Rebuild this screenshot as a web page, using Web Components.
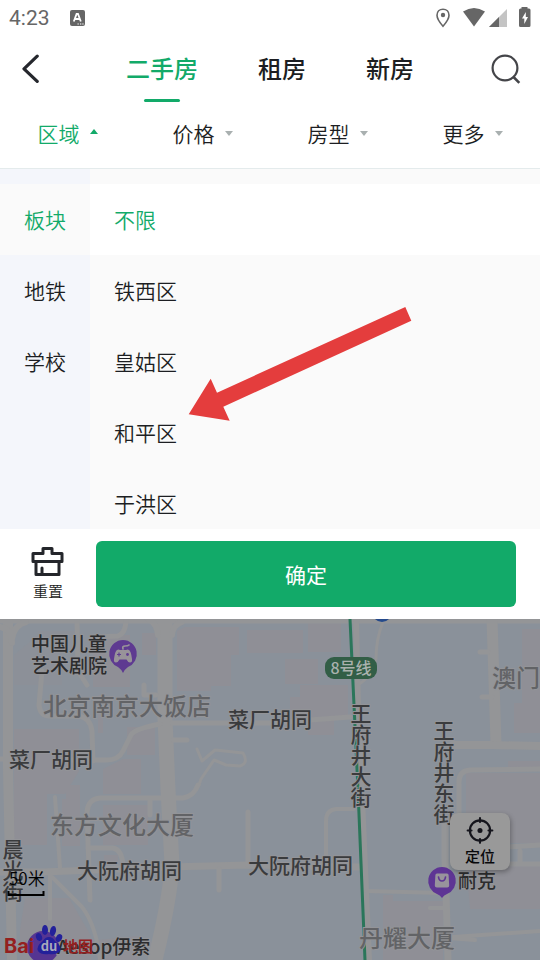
<!DOCTYPE html>
<html lang="zh-CN">
<head>
<meta charset="utf-8">
<meta name="viewport" content="width=device-width, initial-scale=1">
<title>二手房</title>
<style>
  :root {
    --primary-color: #12aa69;
    --text-color: #1c1e22;
    --side-color: #f4f6fb;
    --list-color: #fafafa;
  }
  body {
    margin: 0;
    background-color: #ffffff;
    color: var(--text-color);
    font-family: "Noto Sans CJK SC", sans-serif;
  }
</style>
</head>
<body>
<house-app></house-app>

<script>
class BaseElement extends HTMLElement {
  connectedCallback() {
    if (this.shadowRoot) return;
    const template = document.createElement("template");
    template.innerHTML = this.render();
    this.attachShadow({ mode: "open" });
    this.shadowRoot.appendChild(template.content.cloneNode(true));
  }
}

class StatusBar extends BaseElement {
  render() {
    return `
      <style>
        :host {
          display: flex;
          align-items: center;
          height: 36px;
          padding: 0 8px 0 9px;
          color: #666666;
          font: 21px/36px Roboto, sans-serif;
        }
        .note { margin-left: 20px; }
        .icons { display: flex; align-items: center; margin-left: auto; }
        svg { display: block; }
      </style>
      <span>4:23</span>
      <svg class="note" width="16" height="16" viewBox="0 0 16 16">
        <rect width="15" height="16" rx="2" fill="#666"/>
        <path d="M3.800 11.500 6.600 4h1.400l2.800 7.500M4.800 9h5" fill="none" stroke="#fff" stroke-width="1.800"/>
        <path d="M7.500 14h1.300M10 14h1.300M12.300 14h1.300" stroke="#fff" stroke-width="1.200"/>
      </svg>
      <div class="icons">
        <svg width="96" height="22" viewBox="436 7 96 22" fill="#666">
          <path d="M443 9.200c-3.500 0-6 2.600-6 6 0 4.200 6 11 6 11s6-6.800 6-11c0-3.400-2.500-6-6-6z" fill="none" stroke="#666" stroke-width="1.600"/>
          <circle cx="443" cy="15" r="2.200"/>
          <path d="M463 11.500Q474 4.500 485 11.500L474 26.500z"/>
          <path d="M507 9v18h-18z" fill="#c4c4c4"/>
          <path d="M499 17v10h-10z"/>
          <path d="M521.500 7h6v1.500h1.500a1.500 1.500 0 0 1 1.500 1.500v15.500a1.500 1.500 0 0 1-1.500 1.500h-8.500a1.500 1.500 0 0 1-1.500-1.500V10a1.500 1.500 0 0 1 1.500-1.500h1z"/>
          <path d="M525.800 12 522 18.600h2.300V24l3.700-7h-2.200z" fill="#fff"/>
        </svg>
      </div>
    `;
  }
}

class NavBar extends BaseElement {
  render() {
    return `
      <style>
        :host {
          display: flex;
          align-items: center;
          justify-content: space-between;
          height: 66px;
          padding: 0 19px;
        }
        button {
          display: block;
          padding: 0;
          border: none;
          background: none;
          cursor: pointer;
        }
        svg { display: block; }
        nav { display: flex; gap: 60px; }
        a {
          position: relative;
          padding-bottom: 2px;
          color: var(--text-color);
          font-size: 24px;
          line-height: 64px;
          font-weight: 500;
          text-decoration: none;
        }
        a.active { color: var(--primary-color); }
        a.active::after {
          content: "";
          position: absolute;
          left: 50%;
          bottom: 0;
          width: 36px;
          height: 3px;
          margin-left: -18px;
          border-radius: 2px;
          background-color: var(--primary-color);
        }
      </style>
      <button aria-label="返回">
        <svg width="30" height="30" viewBox="0 0 30 30" fill="none" stroke="#25272d" stroke-width="3.200" stroke-linecap="round" stroke-linejoin="round">
          <path d="M18.200 2.200 5 14.800 18.200 27.400"/>
        </svg>
      </button>
      <nav>
        <a href="#ershoufang" class="active">二手房</a>
        <a href="#zufang">租房</a>
        <a href="#xinfang">新房</a>
      </nav>
      <button aria-label="搜索">
        <svg width="30" height="30" viewBox="0 0 30 30" fill="none" stroke="#444549" stroke-width="2.200">
          <circle cx="14" cy="14" r="12.400"/>
          <path d="M22 22.500 28.300 28.800" stroke-width="2.600"/>
        </svg>
      </button>
    `;
  }
}

class FilterItem extends BaseElement {
  render() {
    return `
      <style>
        :host { display: block; }
        button {
          display: flex;
          align-items: center;
          justify-content: center;
          gap: 10px;
          width: 100%;
          height: 66px;
          padding: 0 0 4px;
          border: none;
          background: none;
          color: var(--text-color);
          font-family: inherit;
          font-size: 21px;
          font-weight: 350;
          cursor: pointer;
        }
        button::after {
          content: "";
          border: 4px solid transparent;
          border-top: 5px solid #a9b0b0;
          border-bottom: none;
        }
        :host([open]) button { color: var(--primary-color); }
        :host([open]) button::after {
          margin-bottom: 3px;
          border-top: none;
          border-bottom: 5px solid var(--primary-color);
        }
      </style>
      <button><slot></slot></button>
    `;
  }
}

class FilterBar extends BaseElement {
  render() {
    return `
      <style>
        :host {
          display: grid;
          grid-template-columns: repeat(4, 1fr);
          border-bottom: 1px solid #e4ebec;
        }
      </style>
      <filter-item open>区域</filter-item>
      <filter-item>价格</filter-item>
      <filter-item>房型</filter-item>
      <filter-item>更多</filter-item>
    `;
  }
}

class OptionItem extends BaseElement {
  render() {
    return `
      <style>
        :host { display: block; }
        button {
          display: block;
          width: 100%;
          height: 71px;
          padding: 0 24px;
          border: none;
          background: none;
          color: var(--text-color);
          font-family: inherit;
          font-size: 21px;
          line-height: 71px;
          font-weight: 350;
          text-align: left;
          white-space: nowrap;
          cursor: pointer;
        }
        :host([active]) button {
          background-color: var(--active-color);
          color: var(--primary-color);
        }
      </style>
      <button><slot></slot></button>
    `;
  }
}

class RegionPanel extends BaseElement {
  render() {
    return `
      <style>
        :host {
          display: grid;
          grid-template-columns: 90px 1fr;
          position: relative;
          max-height: 360px;
          overflow: hidden;
        }
        .side, .list { padding-top: 15px; }
        .side { background-color: var(--side-color); --active-color: var(--list-color); }
        .list { background-color: var(--list-color); --active-color: #ffffff; }
        .arrow {
          position: absolute;
          left: 188px;
          top: 138px;
          pointer-events: none;
        }
      </style>
      <div class="side">
        <option-item active>板块</option-item>
        <option-item>地铁</option-item>
        <option-item>学校</option-item>
      </div>
      <div class="list">
        <option-item active>不限</option-item>
        <option-item>铁西区</option-item>
        <option-item>皇姑区</option-item>
        <option-item>和平区</option-item>
        <option-item>于洪区</option-item>
      </div>
      <svg class="arrow" width="224" height="114" viewBox="0 0 224 114">
        <path d="M.700 107.300 22.700 71.700 29 85.700 217.300 0 223.300 13.700 35.300 99.700 41.700 113.700z" fill="#e43d3d"/>
      </svg>
    `;
  }
}

class ActionBar extends BaseElement {
  render() {
    return `
      <style>
        :host {
          display: flex;
          padding: 12px 24px 12px 0;
          background-color: #ffffff;
        }
        button {
          padding: 0;
          border: none;
          font-family: inherit;
          cursor: pointer;
        }
        .reset {
          display: flex;
          flex-direction: column;
          align-items: center;
          justify-content: center;
          gap: 4px;
          width: 96px;
          padding-bottom: 2px;
          background: none;
          color: var(--text-color);
          font-size: 15px;
          line-height: 20px;
          font-weight: 350;
        }
        .submit {
          flex: 1;
          height: 66px;
          border-radius: 6px;
          background-color: var(--primary-color);
          color: #ffffff;
          font-size: 21px;
          font-weight: 400;
        }
        svg { display: block; }
      </style>
      <button class="reset">
        <svg width="34" height="32" viewBox="0 0 34 32" fill="none" stroke="#24262b" stroke-width="3" stroke-linejoin="round" stroke-linecap="round">
          <path d="M2 8.500h10v-5h9v5h10v8H2zM5 17v12.500h23V17M11 23v5.500"/>
        </svg>
        重置
      </button>
      <button class="submit">确定</button>
    `;
  }
}

class LocateButton extends BaseElement {
  render() {
    return `
      <style>
        :host { display: block; }
        button {
          display: flex;
          flex-direction: column;
          align-items: center;
          gap: 2px;
          width: 60px;
          padding: 4px 0;
          border: none;
          border-radius: 8px;
          background-color: #999999;
          box-shadow: 1px 2px 5px rgba(0, 0, 0, 0.3);
          color: #08080a;
          font-family: inherit;
          font-size: 15px;
          line-height: 20px;
          font-weight: 500;
          cursor: pointer;
        }
        svg { display: block; }
      </style>
      <button>
        <svg width="28" height="27" viewBox="0 0 28 28" fill="none" stroke="#15151c" stroke-width="2.200" stroke-linecap="round">
          <circle cx="14" cy="14" r="10.500"/>
          <path d="M14 1.200v4M14 22.800v4M1.200 14h4M22.800 14h4"/>
          <circle cx="14" cy="14" r="2.600" fill="#15151c" stroke="none"/>
        </svg>
        <slot></slot>
      </button>
    `;
  }
}

class MapView extends BaseElement {
  render() {
    return `
      <style>
        :host {
          display: block;
          position: relative;
          min-height: 341px;
          overflow: hidden;
          background-color: #8a919a;
        }
        .map {
          display: block;
          position: absolute;
          inset: 0;
          width: 100%;
          height: 100%;
        }
        locate-button { position: absolute; right: 30px; bottom: 90px; }
        text { font-family: "Noto Sans CJK SC", sans-serif; font-weight: 500; }
        .block { fill: #8f8f96; }
        .road { fill: none; stroke: #949597; stroke-linecap: round; stroke-linejoin: round; }
        .poi { font-size: 19px; fill: #2c2c2e; }
        .street { font-size: 21px; fill: #3a3b3d; }
        .area { font-size: 24px; fill: #626366; }
        .street, .area, .poi { paint-order: stroke; stroke: #939498; stroke-width: 2px; stroke-linejoin: round; }
        .down { writing-mode: vertical-rl; }
      </style>
      <svg class="map" viewBox="0 0 540 341" preserveAspectRatio="xMinYMin slice">
        <!-- buildings -->
        <g class="block">
          <path d="M14 36 38 16V12H76V32H62V66H14z" opacity=".4"/>
          <path d="M93 16h37v52H93zM177 12l8-4h54v28h-8v31h-20v5h-34z"/>
          <path d="M142 14h14v22h-14zM14 110h65v42l-14 23H14zM127 108h28v28h-28zM103 150l20-10h18v35h-38zM98 76h5v38h-5z"/>
          <path d="M247 11h56v23h-56zM308 1h33v32h-33zM285 40h33v25h-33zM300 66h48v32h-48zM290 78h20v22h-20zM308 98h26v18h-26z"/>
          <path d="M522 10h18v104h-26V84h8zM508 142h32v7h-32z"/>
          <path d="M14 166h33v60H14zM62 180h18v47H62zM66 166h14v22H66zM103 186h45v40h-45zM104 236h14v8h-14z"/>
          <path d="M25 279h44l22 38v24H20v-30zM102 341l-4-20 40-4v24z"/>
          <path d="M466 154h74v70h-74zM466 246h74v44h-70zM383 276h10v6h50v59h-60z"/>
        </g>
        <!-- roads -->
        <g class="road">
          <path d="M0 2H540" stroke-width="5"/>
          <path d="M8 0V150L12 341" stroke-width="10"/>
          <path d="M0 8Q12 10 12 24M26 3Q14 6 12 20" stroke-width="6"/>
          <path d="M165 0V100L168 170 172 246Q170 280 155 341" stroke-width="15"/>
          <path d="M148 0Q157 4 158 16M182 3Q173 6 172 16" stroke-width="6"/>
          <path d="M77 0 78 52 87 66M126 0Q126 14 118 17L92 18" stroke-width="5"/>
          <path d="M42 52 39 86Q40 97 50 97H78Q90 98 92 112L93 142" stroke-width="5"/>
          <path d="M0 140H12M62 141H104Q118 142 123 132L131 116Q134 110 160 105" stroke-width="5"/>
          <path d="M172 104H270L350 98M173 121H187M144 66V76H156" stroke-width="5"/>
          <path d="M197 130 202 142 215 131 243 134Q249 144 240 147L226 146 214 141 201 160 199 166" stroke-width="3"/>
          <path d="M356 0 358 86 369 341" stroke-width="6"/>
          <path d="M383 3Q376 20 376 40 372 58 358 66" stroke-width="3"/>
          <path d="M492 0 496 124" stroke-width="11"/>
          <path d="M480 33H488M482 78H492" stroke-width="5"/>
          <path d="M453 126H490L540 127" stroke-width="8"/>
          <path d="M459 205V165Q458 152 470 151L540 150" stroke-width="5"/>
          <path d="M445 200V240L448 341" stroke-width="7"/>
          <path d="M354 190H336Q326 191 326 202V246M366 272 443 274M430 289H446M453 318 540 312M448 319 475 321" stroke-width="4"/>
          <path d="M508 228 540 226M520 232V242M466 245H540" stroke-width="5"/>
          <path d="M0 253H44L168 248 248 246 360 248" stroke-width="7"/>
          <path d="M55 178 60 249M50 254V300M52 258 82 288Q96 306 100 341" stroke-width="4"/>
          <path d="M90 281 87 193Q88 180 100 179H183Q194 177 198 166M88 229H113Q122 231 123 246M150 180V196" stroke-width="5"/>
          <path d="M248 193V246M219 250V271" stroke-width="5"/>
        </g>
        <!-- metro line -->
        <path d="M350 0 354 86 358 171 365 341" fill="none" stroke="#2b765a" stroke-width="3"/>
        <rect x="325" y="38" width="52" height="22" rx="9" fill="#325e46"/>
        <text x="351" y="55" text-anchor="middle" font-size="16" fill="#aab2ae">8号线</text>
        <circle cx="382" cy="-7" r="10" fill="#254a8b"/>

        <text class="area" x="43" y="96">北京南京大饭店</text>
        <text class="area" x="492" y="68">澳门</text>
        <text class="area" x="50" y="215">东方文化大厦</text>
        <text class="area" x="359" y="328">丹耀大厦</text>

        <text class="street" x="228" y="108">菜厂胡同</text>
        <text class="street" x="9" y="148">菜厂胡同</text>
        <text class="street" x="77" y="259">大阮府胡同</text>
        <text class="street" x="248" y="254">大阮府胡同</text>
        <text class="street down" x="361" y="84">王府井大街</text>
        <text class="street down" x="444" y="101">王府井东街</text>
        <text class="street down" x="13" y="220">晨光街</text>

        <text class="poi" x="31" y="32">中国儿童</text>
        <text class="poi" x="31" y="54">艺术剧院</text>
        <text class="poi" x="458" y="269">耐克</text>

        <!-- theatre pin -->
        <path d="M123 21a14 14 0 0 1 5 27q-3 2-5 6-2-4-5-6a14 14 0 0 1 5-27z" fill="#5e3a91"/>
        <path d="M117 31q-2 1-3 9-.500 3.500 2 3.500 2 0 3.500-3h7q1.500 3 3.500 3 2.500 0 2-3.500-1-8-3-9-1.500-1-3 0h-6q-1.500-1-3 0z" fill="#989399"/>
        <path d="M123 30q-1-3 2-3t4-1" fill="none" stroke="#989399" stroke-width="1.700" stroke-linecap="round"/>
        <path d="M119 33.500v4M117 35.500h4" stroke="#5e3a91" stroke-width="1.200"/>
        <circle cx="127.500" cy="35.500" r="1.400" fill="#5e3a91"/>

        <!-- shop pin -->
        <path d="M442 248a14 14 0 0 1 5 27q-3 1-5 4-2-3-5-4a14 14 0 0 1 5-27z" fill="#5e3594"/>
        <path d="M437 254.500h10q1.500 0 1.600 1.500l.600 10.500q0 2-2 2h-10.400q-2 0-2-2l.600-10.500q.100-1.500 1.600-1.500z" fill="#98939c"/>
        <path d="M438.500 258q.500 4 3.500 4t3.500-4" fill="none" stroke="#5e3594" stroke-width="1.700" stroke-linecap="round"/>

        <!-- scale -->
        <text x="9" y="266" font-size="17" style="font-weight: 350" fill="#000">50米</text>
        <path d="M8.500 272v4h35v-4" fill="none" stroke="#000" stroke-width="2"/>

        <!-- map logo -->
        <circle cx="43" cy="328" r="16" fill="#553592"/>
        <text class="poi" x="57" y="335">Aesop伊索</text>
        <g fill="#23209a">
          <ellipse cx="39" cy="318" rx="3" ry="4" transform="rotate(-20 39 318)"/>
          <ellipse cx="45" cy="311" rx="3" ry="5"/>
          <ellipse cx="53" cy="312" rx="3" ry="5" transform="rotate(12 53 312)"/>
          <ellipse cx="59" cy="319" rx="3" ry="4" transform="rotate(25 59 319)"/>
          <path d="M49 318q4 0 6 4 7 5 5 10-3 4-11 3-8 1-11-3-2-5 5-10 2-4 6-4z"/>
        </g>
        <text x="49" y="332" text-anchor="middle" font-size="13" style="font-weight: 700" fill="#aaa9bb">du</text>
        <text x="4" y="334" font-size="20" style="font-family: Inter, sans-serif; font-weight: 700" fill="#94201f">Bai</text>
        <text x="63" y="333" font-size="15" style="font-weight: 700" fill="#94201f">地图</text>
      </svg>
      <locate-button>定位</locate-button>
    `;
  }
}

class HouseApp extends BaseElement {
  render() {
    return `
      <style>
        :host {
          display: flex;
          flex-direction: column;
          min-height: 100vh;
        }
        map-view { flex: 1; }
      </style>
      <status-bar></status-bar>
      <nav-bar></nav-bar>
      <filter-bar></filter-bar>
      <region-panel></region-panel>
      <action-bar></action-bar>
      <map-view></map-view>
    `;
  }
}

customElements.define("status-bar", StatusBar);
customElements.define("nav-bar", NavBar);
customElements.define("filter-item", FilterItem);
customElements.define("filter-bar", FilterBar);
customElements.define("option-item", OptionItem);
customElements.define("region-panel", RegionPanel);
customElements.define("action-bar", ActionBar);
customElements.define("locate-button", LocateButton);
customElements.define("map-view", MapView);
customElements.define("house-app", HouseApp);
</script>
</body>
</html>
